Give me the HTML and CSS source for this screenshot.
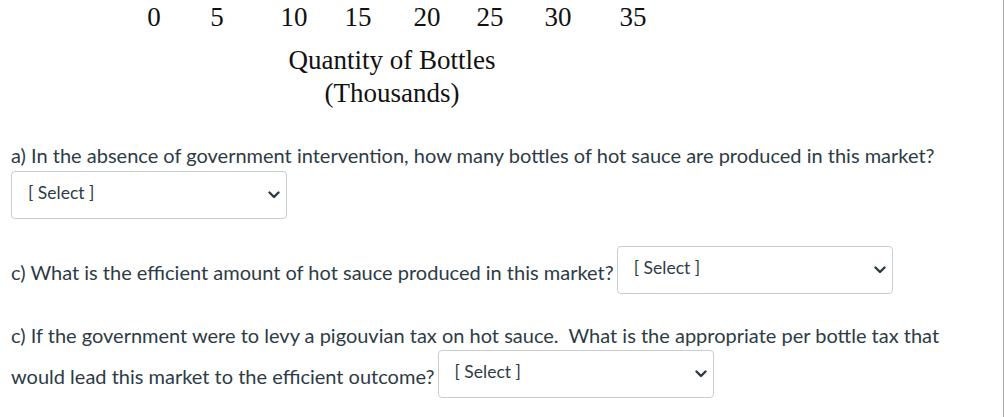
FILE: index.html
```html
<!DOCTYPE html>
<html>
<head>
<meta charset="utf-8">
<link rel="stylesheet" href="styles.css">
</head>
<body>
<div class="page">
  <div class="figure">
    <div class="ticks">
      <span class="tick" style="left:154px">0</span>
      <span class="tick" style="left:217px">5</span>
      <span class="tick" style="left:294px">10</span>
      <span class="tick" style="left:358px">15</span>
      <span class="tick" style="left:427px">20</span>
      <span class="tick" style="left:490px">25</span>
      <span class="tick" style="left:558px">30</span>
      <span class="tick" style="left:633px">35</span>
    </div>
    <div class="axis-title">Quantity of Bottles<br>(Thousands)</div>
  </div>

  <div class="question q-a">
    <p class="text">a) In the absence of government intervention, how many bottles of hot sauce are produced in this market?</p>
    <div class="select"><span class="select-label">[ Select ]</span><svg class="chev" width="12" height="8" viewBox="0 0 12 8"><path d="M1.5 1.5 L6 6 L10.5 1.5" fill="none" stroke="#2d3b45" stroke-width="2.4" stroke-linecap="round" stroke-linejoin="round"/></svg></div>
  </div>

  <div class="question q-c">
    <p class="text">c) What is the efficient amount of hot sauce produced in this market? <span class="select inline"><span class="select-label">[ Select ]</span><svg class="chev" width="12" height="8" viewBox="0 0 12 8"><path d="M1.5 1.5 L6 6 L10.5 1.5" fill="none" stroke="#2d3b45" stroke-width="2.4" stroke-linecap="round" stroke-linejoin="round"/></svg></span></p>
  </div>

  <div class="question q-d">
    <p class="text">c) If the government were to levy a pigouvian tax on hot sauce.&nbsp; What is the appropriate per bottle tax that would lead this market to the efficient outcome? <span class="select inline"><span class="select-label">[ Select ]</span><svg class="chev" width="12" height="8" viewBox="0 0 12 8"><path d="M1.5 1.5 L6 6 L10.5 1.5" fill="none" stroke="#2d3b45" stroke-width="2.4" stroke-linecap="round" stroke-linejoin="round"/></svg></span></p>
  </div>
</div>
</body>
</html>
```

FILE: styles.css
```css
html, body {
  margin: 0;
  padding: 0;
  background: #ffffff;
}
body {
  font-family: Lato, "Open Sans", sans-serif;
  color: #2d3b45;
}
.page {
  width: 1003px;
  height: 417px;
  border-right: 1px solid #a8a8a8;
  overflow: hidden;
}
.figure {
  position: relative;
  height: 118px;
  font-family: "Liberation Serif", "Times New Roman", serif;
  color: #111;
}
.ticks {
  position: relative;
  height: 34px;
}
.tick {
  position: absolute;
  top: 0;
  transform: translateX(-50%);
  font-size: 27px;
  line-height: 34px;
}
.axis-title {
  width: 784px;
  text-align: center;
  font-size: 27px;
  line-height: 33px;
  margin-top: 10px;
}
.question {
  padding-left: 11px;
}
.text {
  margin: 0;
  font-size: 20px;
  line-height: 30px;
}
.q-a {
  margin-top: 22px;
}
.q-a .select {
  margin-top: 1px;
}
.q-c {
  margin-top: 27px;
}
.q-d {
  margin-top: 26px;
}
.q-d .text {
  width: 960px;
}
.select {
  box-sizing: border-box;
  width: 276px;
  height: 48px;
  border: 1px solid #c7cdd1;
  border-radius: 4px;
  background: #fff;
  display: flex;
  align-items: center;
  justify-content: space-between;
  padding: 0 6px 0 16px;
}
.select.inline {
  display: inline-flex;
  vertical-align: 6px;
  margin-left: -2px;
}
.select-label {
  font-size: 17.5px;
  line-height: 20px;
  margin-top: -4px;
}
.chev {
  display: block;
}
```
